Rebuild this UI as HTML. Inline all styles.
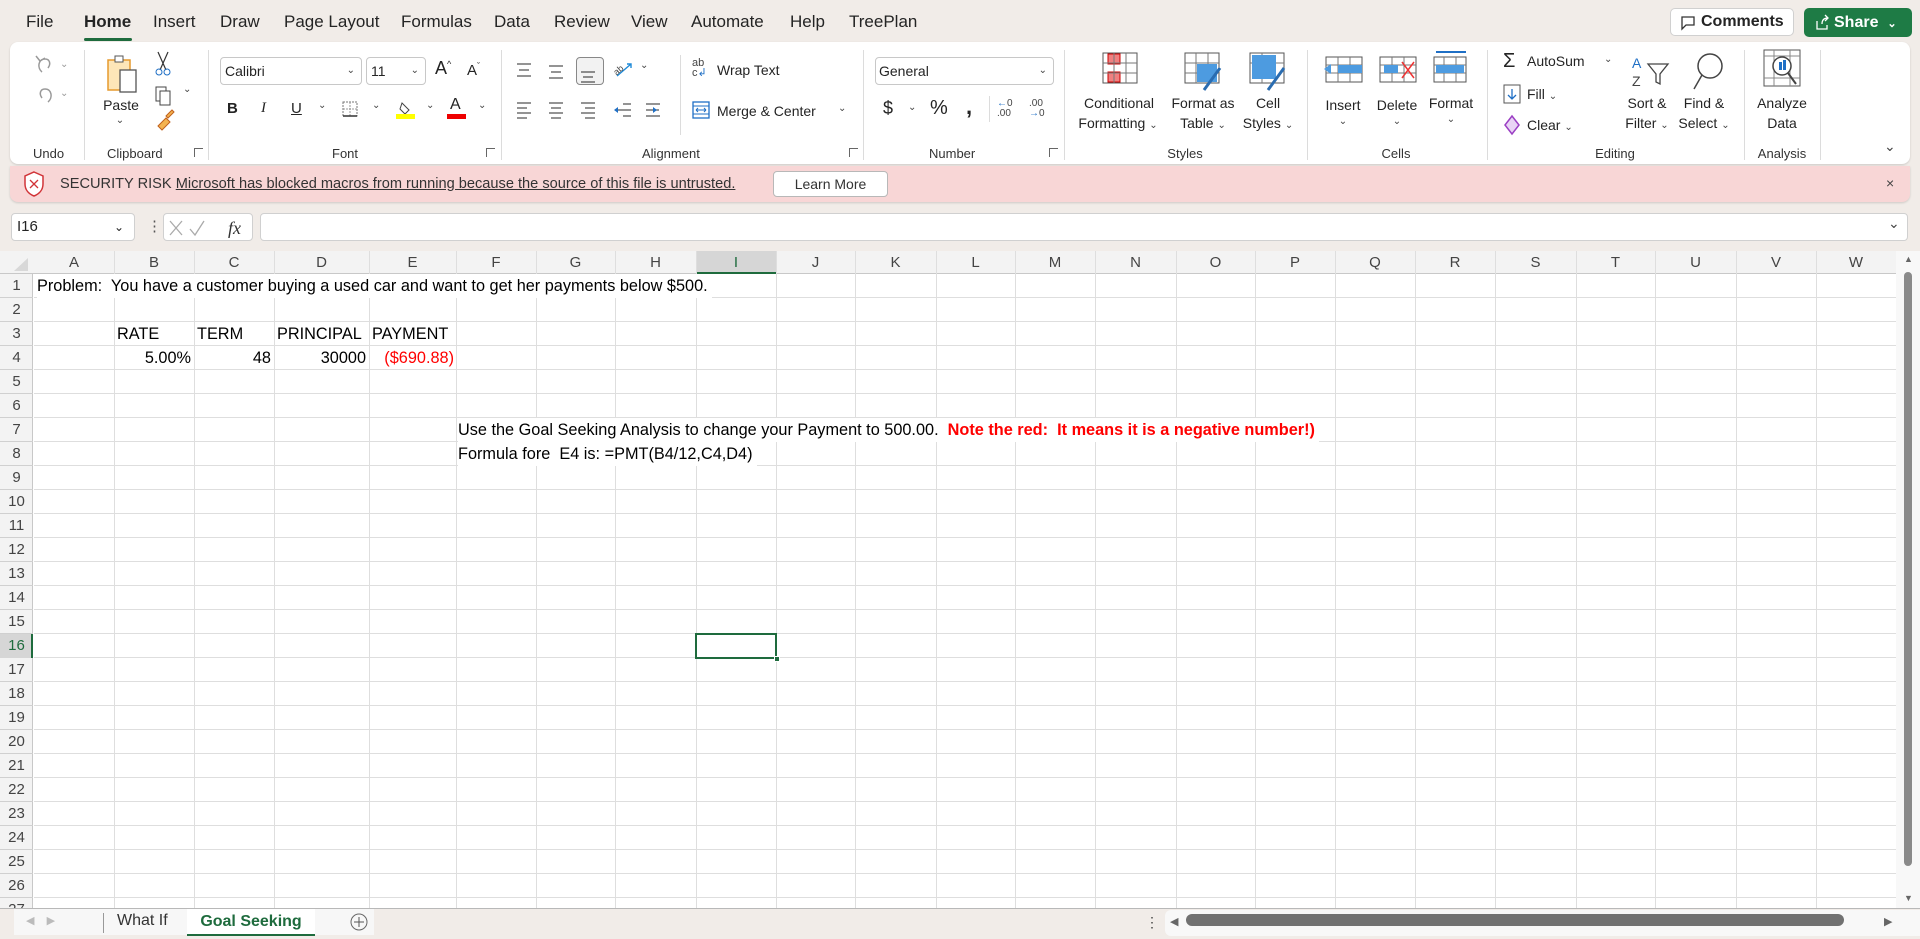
<!DOCTYPE html>
<html><head><meta charset="utf-8"><style>
*{box-sizing:border-box;margin:0;padding:0}
body{width:1920px;height:939px;overflow:hidden;background:#f1ece8;font-family:"Liberation Sans",sans-serif;color:#242424;position:relative}
.a{position:absolute;white-space:nowrap}
.c{transform:translateX(-50%);text-align:center}
.tab{top:12px;font-size:17px;color:#242424}
.lbl{top:146px;font-size:13px;color:#333}
.rb{font-size:14px;color:#242424}
.sep{position:absolute;width:1px;background:#dcdcdc}
.vl{position:absolute;top:251px;width:1px;height:657px;background:#dedede}
.ch{position:absolute;top:251px;height:23px;font-size:15px;color:#444;text-align:center;line-height:23px}
.rn{position:absolute;left:0;width:33px;text-align:center;font-size:15px;color:#444;height:24px;line-height:24px}
.cell{position:absolute;font-size:16.3px;color:#000;line-height:24px;height:24px}
.dd{font-size:10px;color:#444}
</style></head><body>

<div class="a tab" style="left:26px">File</div>
<div class="a tab" style="left:84px;font-weight:bold">Home</div>
<div class="a" style="left:84px;top:38px;width:48px;height:3px;background:#1e6b3d;border-radius:2px"></div>
<div class="a tab" style="left:153px">Insert</div>
<div class="a tab" style="left:220px">Draw</div>
<div class="a tab" style="left:284px">Page Layout</div>
<div class="a tab" style="left:401px">Formulas</div>
<div class="a tab" style="left:494px">Data</div>
<div class="a tab" style="left:554px">Review</div>
<div class="a tab" style="left:631px">View</div>
<div class="a tab" style="left:691px">Automate</div>
<div class="a tab" style="left:790px">Help</div>
<div class="a tab" style="left:849px">TreePlan</div>

<div class="a" style="left:1670px;top:8px;width:124px;height:28px;background:#fff;border:1px solid #d0d0d0;border-radius:5px;font-size:16px;font-weight:bold;line-height:26px;padding-left:30px">Comments</div>
<svg class="a" style="left:1680px;top:15px" width="16" height="16"><path d="M2 2h12v8H6l-4 4z" fill="none" stroke="#333" stroke-width="1.3"/></svg>
<div class="a" style="left:1804px;top:8px;width:108px;height:29px;background:#1e7b45;border-radius:5px;color:#fff;font-size:16px;font-weight:bold;line-height:29px;padding-left:30px">Share &nbsp;<span style="font-size:11px">&#8964;</span></div>
<svg class="a" style="left:1814px;top:14px" width="16" height="17"><path d="M3 7v8h10v-4M8 10c0-4 2-6 6-6M11 1l3 3-3 3" fill="none" stroke="#fff" stroke-width="1.3"/></svg>

<div class="a" style="left:10px;top:42px;width:1900px;height:122px;background:#fff;border-radius:8px;box-shadow:0 1px 2px rgba(0,0,0,.15)"></div>
<div class="sep" style="left:84px;top:50px;height:110px"></div>
<div class="sep" style="left:208px;top:50px;height:110px"></div>
<div class="sep" style="left:501px;top:50px;height:110px"></div>
<div class="sep" style="left:680px;top:55px;height:80px"></div>
<div class="sep" style="left:863px;top:50px;height:110px"></div>
<div class="sep" style="left:1064px;top:50px;height:110px"></div>
<div class="sep" style="left:1307px;top:50px;height:110px"></div>
<div class="sep" style="left:1487px;top:50px;height:110px"></div>
<div class="sep" style="left:1744px;top:50px;height:110px"></div>
<div class="sep" style="left:1820px;top:50px;height:110px"></div>

<svg class="a" style="left:30px;top:50px" width="40" height="60"><path d="M12 22c-5-4-4-13 3-13 5 0 6 5 3 9M6 6l4 5 5-3" fill="none" stroke="#999" stroke-width="1.5"/><path d="M12 52c-5-4-4-13 3-13 5 0 6 5 3 9" fill="none" stroke="#999" stroke-width="1.5" transform="scale(-1,1) translate(-30,0)"/><text x="30" y="17" font-size="10" fill="#999">&#8964;</text><text x="30" y="46" font-size="10" fill="#999">&#8964;</text></svg>
<div class="a lbl" style="left:33px">Undo</div>

<svg class="a" style="left:104px;top:52px" width="40" height="44"><rect x="4" y="8" width="22" height="30" fill="#fde6b8" stroke="#e69a2e" stroke-width="1.5"/><rect x="11" y="4" width="8" height="6" fill="#fff" stroke="#555"/><rect x="16" y="18" width="16" height="22" fill="#fff" stroke="#555" stroke-width="1.3"/></svg>
<div class="a rb c" style="left:121px;top:97px">Paste</div>
<div class="a dd c" style="left:120px;top:115px">&#8964;</div>
<svg class="a" style="left:152px;top:50px" width="24" height="90"><path d="M6 2l8 18M16 2L8 20" stroke="#333" stroke-width="1.2"/><circle cx="7" cy="22" r="3" fill="none" stroke="#1f6fc5"/><circle cx="15" cy="22" r="3" fill="none" stroke="#1f6fc5"/><rect x="4" y="37" width="10" height="14" fill="#fff" stroke="#444"/><rect x="8" y="41" width="10" height="14" fill="#fff" stroke="#444"/><path d="M14 66l6-6 2 2-6 6zM6 76l8-8 4 4-8 8z" fill="#f4b350" stroke="#c0601b"/></svg>
<div class="a dd" style="left:183px;top:84px">&#8964;</div>
<div class="a lbl" style="left:107px">Clipboard</div>
<div class="a" style="left:194px;top:148px;width:9px;height:9px;border:1px solid #666;border-width:1px 0 0 1px"></div>

<div class="a" style="left:220px;top:57px;width:142px;height:28px;border:1px solid #c8c8c8;border-radius:4px;font-size:14px;line-height:26px;padding-left:4px">Calibri<span class="dd" style="position:absolute;right:6px">&#8964;</span></div>
<div class="a" style="left:366px;top:57px;width:60px;height:28px;border:1px solid #c8c8c8;border-radius:4px;font-size:14px;line-height:26px;padding-left:4px">11<span class="dd" style="position:absolute;right:6px">&#8964;</span></div>
<div class="a rb" style="left:435px;top:58px;font-size:18px">A<sup style="font-size:9px">^</sup></div>
<div class="a rb" style="left:467px;top:61px;font-size:15px">A<sup style="font-size:9px">&#711;</sup></div>
<div class="a" style="left:227px;top:100px;font-size:15px;font-weight:bold">B</div>
<div class="a" style="left:261px;top:100px;font-size:15px;font-style:italic;font-family:'Liberation Serif'">I</div>
<div class="a" style="left:291px;top:100px;font-size:15px;text-decoration:underline">U</div>
<div class="a dd" style="left:318px;top:100px">&#8964;</div>
<svg class="a" style="left:342px;top:101px" width="16" height="16"><rect x="1" y="1" width="14" height="14" fill="none" stroke="#777" stroke-dasharray="2 1"/><path d="M8 1v14M1 8h14" stroke="#999" stroke-dasharray="2 1"/><path d="M1 15h14" stroke="#333" stroke-width="1.5"/></svg>
<div class="a dd" style="left:372px;top:100px">&#8964;</div>
<svg class="a" style="left:396px;top:100px" width="20" height="20"><path d="M6 3l7 7-4 4-5-5z" fill="none" stroke="#444"/><rect x="0" y="14" width="19" height="5" fill="#ffff00"/></svg>
<div class="a dd" style="left:426px;top:100px">&#8964;</div>
<div class="a" style="left:450px;top:96px;font-size:16px">A</div>
<div class="a" style="left:447px;top:114px;width:19px;height:5px;background:#e00"></div>
<div class="a dd" style="left:478px;top:100px">&#8964;</div>
<div class="a lbl" style="left:332px">Font</div>
<div class="a" style="left:486px;top:148px;width:9px;height:9px;border:1px solid #666;border-width:1px 0 0 1px"></div>

<svg class="a" style="left:514px;top:60px" width="160" height="66"><g stroke="#555" stroke-width="1.3"><path d="M3 4h14M5 10h10M3 16h14"/><path d="M35 6h14M37 12h10M35 18h14"/><path d="M67 12h14M69 17h10M67 22h14"/><path d="M3 43h14M3 48h10M3 53h14M3 58h10"/><path d="M35 43h14M37 48h10M35 53h14M37 58h10"/><path d="M67 43h14M71 48h10M67 53h14M71 58h10"/><path d="M109 44h8M109 56h8M104 50h13M132 44h14M132 56h14M132 50h13"/></g><path d="M100 50l4-3v6zM143 50l-4-3v6z" fill="#1f6fc5"/><path d="M103 16l14-12M113 4h4v4" stroke="#1f8ad8" stroke-width="1.4" fill="none"/><text x="99" y="14" font-size="9" fill="#444" transform="rotate(-40 103 10)">ab</text></svg>
<div class="a" style="left:576px;top:57px;width:28px;height:28px;border:1px solid #888;border-radius:4px;background:rgba(0,0,0,.05)"></div>
<div class="a dd" style="left:640px;top:60px">&#8964;</div>
<div class="a" style="left:692px;top:58px;font-size:11px;line-height:10px;color:#444">ab<br>c<span style="color:#1f6fc5">&#8626;</span></div>
<div class="a rb" style="left:717px;top:62px">Wrap Text</div>
<svg class="a" style="left:692px;top:101px" width="18" height="18"><rect x="1" y="1" width="16" height="16" fill="#fff" stroke="#1f6fc5" stroke-width="1.3"/><path d="M1 5h16M1 13h16M4 9h10M4 9l2-2M4 9l2 2M14 9l-2-2M14 9l-2 2" stroke="#1f6fc5"/></svg>
<div class="a rb" style="left:717px;top:103px">Merge &amp; Center</div>
<div class="a dd" style="left:838px;top:103px">&#8964;</div>
<div class="a lbl" style="left:642px">Alignment</div>
<div class="a" style="left:849px;top:148px;width:9px;height:9px;border:1px solid #666;border-width:1px 0 0 1px"></div>

<div class="a" style="left:875px;top:57px;width:179px;height:28px;border:1px solid #c8c8c8;border-radius:4px;font-size:14px;line-height:26px;padding-left:3px">General<span class="dd" style="position:absolute;right:6px">&#8964;</span></div>
<div class="a" style="left:883px;top:98px;font-size:18px">$</div>
<div class="a dd" style="left:908px;top:102px">&#8964;</div>
<div class="a" style="left:930px;top:97px;font-size:20px">%</div>
<div class="a" style="left:966px;top:94px;font-size:22px;font-weight:bold">,</div>
<div class="sep" style="left:989px;top:96px;height:26px"></div>
<div class="a" style="left:997px;top:99px;font-size:10px;line-height:10px;color:#444"><span style="color:#1f6fc5">&larr;</span>0<br>.00</div>
<div class="a" style="left:1029px;top:99px;font-size:10px;line-height:10px;color:#444">.00<br><span style="color:#1f6fc5">&rarr;</span>0</div>
<div class="a lbl" style="left:929px">Number</div>
<div class="a" style="left:1049px;top:148px;width:9px;height:9px;border:1px solid #666;border-width:1px 0 0 1px"></div>

<svg class="a" style="left:1100px;top:50px" width="230" height="50"><g fill="#fff" stroke="#555"><rect x="3" y="3" width="34" height="30"/><rect x="85" y="3" width="34" height="30"/><rect x="150" y="3" width="34" height="30"/></g><rect x="8" y="4" width="12" height="10" fill="#f08080" stroke="#c00"/><rect x="8" y="22" width="12" height="10" fill="#f08080" stroke="#c00"/><path d="M3 13h34M3 23h34M14 3v30M26 3v30M85 13h34M85 23h34M96 3v30M108 3v30M150 13h34M162 3v30" stroke="#777"/><rect x="97" y="14" width="20" height="18" fill="#4d9be0"/><rect x="152" y="5" width="24" height="24" fill="#4d9be0"/><path d="M104 40l16-22M168 40l16-22" stroke="#2a6cb0" stroke-width="3"/></svg>
<div class="a rb c" style="left:1119px;top:95px">Conditional</div>
<div class="a rb c" style="left:1118px;top:115px">Formatting <span class="dd">&#8964;</span></div>
<div class="a rb c" style="left:1203px;top:95px">Format as</div>
<div class="a rb c" style="left:1203px;top:115px">Table <span class="dd">&#8964;</span></div>
<div class="a rb c" style="left:1268px;top:95px">Cell</div>
<div class="a rb c" style="left:1268px;top:115px">Styles <span class="dd">&#8964;</span></div>
<div class="a lbl c" style="left:1185px">Styles</div>

<svg class="a" style="left:1322px;top:50px" width="160" height="40"><g fill="#fff" stroke="#555"><rect x="4" y="7" width="36" height="25"/><rect x="58" y="7" width="36" height="25"/><rect x="112" y="7" width="32" height="25"/></g><path d="M4 15h36M4 23h36M16 7v25M28 7v25M58 15h36M58 23h36M70 7v25M82 7v25M112 15h32M112 23h32M122 7v25M134 7v25" stroke="#777"/><rect x="16" y="15" width="24" height="8" fill="#4d9be0"/><rect x="62" y="15" width="14" height="8" fill="#4d9be0"/><rect x="114" y="15" width="28" height="8" fill="#4d9be0"/><path d="M2 19l7-5v10z" fill="#4d9be0"/><path d="M80 12l12 16M92 12L80 28" stroke="#e33" stroke-width="1.5"/><path d="M114 2h30" stroke="#1f6fc5" stroke-width="2"/></svg>
<div class="a rb c" style="left:1343px;top:97px">Insert</div>
<div class="a dd c" style="left:1343px;top:116px">&#8964;</div>
<div class="a rb c" style="left:1397px;top:97px">Delete</div>
<div class="a dd c" style="left:1397px;top:116px">&#8964;</div>
<div class="a rb c" style="left:1451px;top:95px">Format</div>
<div class="a dd c" style="left:1451px;top:114px">&#8964;</div>
<div class="a lbl c" style="left:1396px">Cells</div>

<div class="a" style="left:1503px;top:50px;font-size:20px">&Sigma;</div>
<div class="a rb" style="left:1527px;top:53px">AutoSum</div>
<div class="a dd" style="left:1604px;top:54px">&#8964;</div>
<svg class="a" style="left:1503px;top:84px" width="18" height="20"><rect x="1" y="1" width="16" height="18" fill="#fff" stroke="#555"/><path d="M9 5v10M5 11l4 4 4-4" stroke="#1f6fc5" fill="none" stroke-width="1.3"/></svg>
<div class="a rb" style="left:1527px;top:86px">Fill <span class="dd">&#8964;</span></div>
<svg class="a" style="left:1503px;top:114px" width="18" height="22"><path d="M9 2l7 9-7 9-7-9z" fill="#e9d4f5" stroke="#9b3fc4" stroke-width="1.5"/></svg>
<div class="a rb" style="left:1527px;top:117px">Clear <span class="dd">&#8964;</span></div>
<svg class="a" style="left:1628px;top:50px" width="110" height="42"><text x="4" y="18" font-size="14" fill="#1f6fc5">A</text><text x="4" y="36" font-size="14" fill="#444">Z</text><path d="M20 14h20l-8 10v10l-4-2v-8z" fill="none" stroke="#444" stroke-width="1.3"/><circle cx="82" cy="16" r="12" fill="none" stroke="#444" stroke-width="1.5"/><path d="M74 25l-8 14" stroke="#444" stroke-width="1.5"/></svg>
<div class="a rb c" style="left:1647px;top:95px">Sort &amp;</div>
<div class="a rb c" style="left:1647px;top:115px">Filter <span class="dd">&#8964;</span></div>
<div class="a rb c" style="left:1704px;top:95px">Find &amp;</div>
<div class="a rb c" style="left:1704px;top:115px">Select <span class="dd">&#8964;</span></div>
<div class="a lbl c" style="left:1615px">Editing</div>

<svg class="a" style="left:1762px;top:48px" width="42" height="42"><rect x="2" y="2" width="36" height="36" fill="#fff" stroke="#555"/><path d="M2 8h36M2 30h36M12 2v36M28 2v36" stroke="#888"/><circle cx="20" cy="18" r="9" fill="#fff" stroke="#444" stroke-width="1.5"/><rect x="17" y="14" width="3" height="8" fill="#1f6fc5"/><rect x="21" y="12" width="3" height="10" fill="#1f6fc5"/><path d="M26 25l8 11" stroke="#444" stroke-width="2"/></svg>
<div class="a rb c" style="left:1782px;top:95px">Analyze</div>
<div class="a rb c" style="left:1782px;top:115px">Data</div>
<div class="a lbl c" style="left:1782px">Analysis</div>
<div class="a" style="left:1884px;top:138px;font-size:14px;color:#444">&#8964;</div>

<div class="a" style="left:10px;top:166px;width:1900px;height:36px;background:#f8d6d6;border-radius:0 0 8px 8px;box-shadow:0 1px 2px rgba(0,0,0,.15)"></div>
<svg class="a" style="left:23px;top:171px" width="22" height="26"><path d="M11 1l9 4v8c0 6-4 10-9 12C6 23 2 19 2 13V5z" fill="#fff" stroke="#d13438" stroke-width="1.5"/><path d="M7 9l8 8M15 9l-8 8" stroke="#d13438" stroke-width="1.3"/></svg>
<div class="a" style="left:60px;top:176px;font-size:14.6px;color:#333">SECURITY RISK <span style="text-decoration:underline">Microsoft has blocked macros from running because the source of this file is untrusted.</span></div>
<div class="a" style="left:773px;top:171px;width:115px;height:26px;background:#fff;border:1px solid #b8b8b8;border-radius:4px;font-size:14px;line-height:24px;text-align:center;color:#333">Learn More</div>
<div class="a" style="left:1886px;top:175px;font-size:14px;color:#444">&#215;</div>

<div class="a" style="left:11px;top:213px;width:124px;height:28px;background:#fff;border:1px solid #d0d0d0;border-radius:4px;font-size:15px;line-height:26px;padding-left:5px">I16<span style="position:absolute;right:10px;font-size:12px">&#8964;</span></div>
<div class="a" style="left:147px;top:217px;font-size:15px;color:#555">&#8942;</div>
<div class="a" style="left:163px;top:213px;width:90px;height:28px;background:#fff;border:1px solid #d0d0d0;border-radius:4px"></div>
<svg class="a" style="left:168px;top:218px" width="84" height="20"><path d="M2 3l12 14M14 3L2 17M22 11l5 6 9-14" stroke="#aaa" stroke-width="1.3" fill="none"/><text x="60" y="16" font-family="Liberation Serif" font-style="italic" font-size="18" fill="#333">fx</text></svg>
<div class="a" style="left:260px;top:213px;width:1648px;height:28px;background:#fff;border:1px solid #d0d0d0;border-radius:4px"></div>
<div class="a" style="left:1888px;top:215px;font-size:14px;color:#444">&#8964;</div>

<div class="a" style="left:0;top:251px;width:1896px;height:657px;background:#fff"></div>
<div class="a" style="left:0;top:251px;width:1896px;height:23px;background:#f3f3f3;border-bottom:1px solid #c8c8c8"></div>
<div class="a" style="left:0;top:274px;width:33px;height:634px;background:#f3f3f3;border-right:1px solid #c8c8c8"></div>
<div class="a" style="left:34px;top:274px;width:1862px;height:634px;background:repeating-linear-gradient(to bottom,transparent 0 23px,#dedede 23px 24px)"></div>
<div class="a" style="left:0;top:274px;width:33px;height:634px;background:repeating-linear-gradient(to bottom,transparent 0 23px,#d0d0d0 23px 24px)"></div>
<svg class="a" style="left:10px;top:256px" width="20" height="16"><path d="M18 2v13H4z" fill="#d8d8d8"/></svg>
<div class="a" style="left:696px;top:251px;width:80px;height:23px;background:#d6d6d6;border-bottom:2px solid #1e6b3d"></div>
<div class="a" style="left:0;top:634px;width:33px;height:24px;background:#d6d6d6;border-right:2px solid #1e6b3d"></div>

<div class="vl" style="left:114px"></div><div class="vl" style="left:194px"></div><div class="vl" style="left:274px"></div><div class="vl" style="left:369px"></div><div class="vl" style="left:456px"></div><div class="vl" style="left:536px"></div><div class="vl" style="left:615px"></div><div class="vl" style="left:696px"></div><div class="vl" style="left:776px"></div><div class="vl" style="left:855px"></div><div class="vl" style="left:936px"></div><div class="vl" style="left:1015px"></div><div class="vl" style="left:1095px"></div><div class="vl" style="left:1176px"></div><div class="vl" style="left:1255px"></div><div class="vl" style="left:1335px"></div><div class="vl" style="left:1415px"></div><div class="vl" style="left:1495px"></div><div class="vl" style="left:1576px"></div><div class="vl" style="left:1655px"></div><div class="vl" style="left:1736px"></div><div class="vl" style="left:1816px"></div>

<div class="ch" style="left:34px;width:80px">A</div><div class="ch" style="left:114px;width:80px">B</div><div class="ch" style="left:194px;width:80px">C</div><div class="ch" style="left:274px;width:95px">D</div><div class="ch" style="left:369px;width:87px">E</div><div class="ch" style="left:456px;width:80px">F</div><div class="ch" style="left:536px;width:79px">G</div><div class="ch" style="left:615px;width:81px">H</div><div class="ch" style="left:696px;width:80px;color:#1e6b3d">I</div><div class="ch" style="left:776px;width:79px">J</div><div class="ch" style="left:855px;width:81px">K</div><div class="ch" style="left:936px;width:79px">L</div><div class="ch" style="left:1015px;width:80px">M</div><div class="ch" style="left:1095px;width:81px">N</div><div class="ch" style="left:1176px;width:79px">O</div><div class="ch" style="left:1255px;width:80px">P</div><div class="ch" style="left:1335px;width:80px">Q</div><div class="ch" style="left:1415px;width:80px">R</div><div class="ch" style="left:1495px;width:81px">S</div><div class="ch" style="left:1576px;width:79px">T</div><div class="ch" style="left:1655px;width:81px">U</div><div class="ch" style="left:1736px;width:80px">V</div><div class="ch" style="left:1816px;width:80px">W</div>

<div class="rn" style="top:274px">1</div><div class="rn" style="top:298px">2</div><div class="rn" style="top:322px">3</div><div class="rn" style="top:346px">4</div><div class="rn" style="top:370px">5</div><div class="rn" style="top:394px">6</div><div class="rn" style="top:418px">7</div><div class="rn" style="top:442px">8</div><div class="rn" style="top:466px">9</div><div class="rn" style="top:490px">10</div><div class="rn" style="top:514px">11</div><div class="rn" style="top:538px">12</div><div class="rn" style="top:562px">13</div><div class="rn" style="top:586px">14</div><div class="rn" style="top:610px">15</div><div class="rn" style="top:634px;color:#1e6b3d">16</div><div class="rn" style="top:658px">17</div><div class="rn" style="top:682px">18</div><div class="rn" style="top:706px">19</div><div class="rn" style="top:730px">20</div><div class="rn" style="top:754px">21</div><div class="rn" style="top:778px">22</div><div class="rn" style="top:802px">23</div><div class="rn" style="top:826px">24</div><div class="rn" style="top:850px">25</div><div class="rn" style="top:874px">26</div><div class="rn" style="top:898px;height:10px;overflow:hidden;line-height:24px">27</div>

<div class="cell a" style="left:37px;top:274px;background:#fff;padding-right:4px">Problem:&nbsp; You have a customer buying a used car and want to get her payments below $500.</div>
<div class="cell a" style="left:117px;top:322px">RATE</div>
<div class="cell a" style="left:197px;top:322px">TERM</div>
<div class="cell a" style="left:277px;top:322px">PRINCIPAL</div>
<div class="cell a" style="left:372px;top:322px">PAYMENT</div>
<div class="cell a" style="left:114px;top:346px;width:77px;text-align:right">5.00%</div>
<div class="cell a" style="left:194px;top:346px;width:77px;text-align:right">48</div>
<div class="cell a" style="left:274px;top:346px;width:92px;text-align:right">30000</div>
<div class="cell a" style="left:369px;top:346px;width:85px;text-align:right;color:#f00">($690.88)</div>
<div class="cell a" style="left:458px;top:418px;background:#fff;padding-right:4px">Use the Goal Seeking Analysis to change your Payment to 500.00.&nbsp; <b style="color:#f00">Note the red:&nbsp; It means it is a negative number!)</b></div>
<div class="cell a" style="left:458px;top:442px;background:#fff;padding-right:4px">Formula fore&nbsp; E4 is: =PMT(B4/12,C4,D4)</div>

<div class="a" style="left:695px;top:633px;width:82px;height:26px;border:2px solid #1e6b3d"></div>
<div class="a" style="left:774px;top:656px;width:6px;height:6px;background:#1e6b3d;border:1px solid #fff"></div>

<div class="a" style="left:1896px;top:251px;width:24px;height:657px;background:#f8f8f8"></div>
<div class="a" style="left:1904px;top:254px;font-size:9px;color:#666">&#9650;</div>
<div class="a" style="left:1904px;top:272px;width:8px;height:594px;background:#8a8a8a;border-radius:4px"></div>
<div class="a" style="left:1904px;top:893px;font-size:9px;color:#666">&#9660;</div>

<div class="a" style="left:0;top:908px;width:1920px;height:31px;background:#f1ece8;border-top:1px solid #b8b8b8"></div>
<div class="a" style="left:14px;top:909px;width:360px;height:26px;background:#f7f7f7"></div>
<div class="a" style="left:26px;top:914px;font-size:11px;color:#bbb">&#9664;&nbsp;&nbsp;&nbsp;&nbsp;&#9654;</div>
<div class="a" style="left:103px;top:913px;width:1px;height:20px;background:#999"></div>
<div class="a" style="left:117px;top:912px;font-size:16px;color:#333">What If</div>
<div class="a" style="left:187px;top:909px;width:128px;height:27px;background:#fff;border-bottom:2px solid #1e6b3d;font-size:16px;font-weight:bold;color:#1e6b3d;text-align:center;line-height:25px">Goal Seeking</div>
<svg class="a" style="left:349px;top:912px" width="20" height="20"><circle cx="10" cy="10" r="8" fill="none" stroke="#666"/><path d="M10 5v10M5 10h10" stroke="#555"/></svg>
<div class="a" style="left:1145px;top:914px;font-size:14px;color:#444">&#8942;</div>
<div class="a" style="left:1165px;top:910px;width:770px;height:26px;background:#f8f8f8;border-radius:6px"></div>
<div class="a" style="left:1170px;top:915px;font-size:11px;color:#666">&#9664;</div>
<div class="a" style="left:1186px;top:914px;width:658px;height:12px;background:#717171;border-radius:6px"></div>
<div class="a" style="left:1884px;top:915px;font-size:11px;color:#666">&#9654;</div>
</body></html>
